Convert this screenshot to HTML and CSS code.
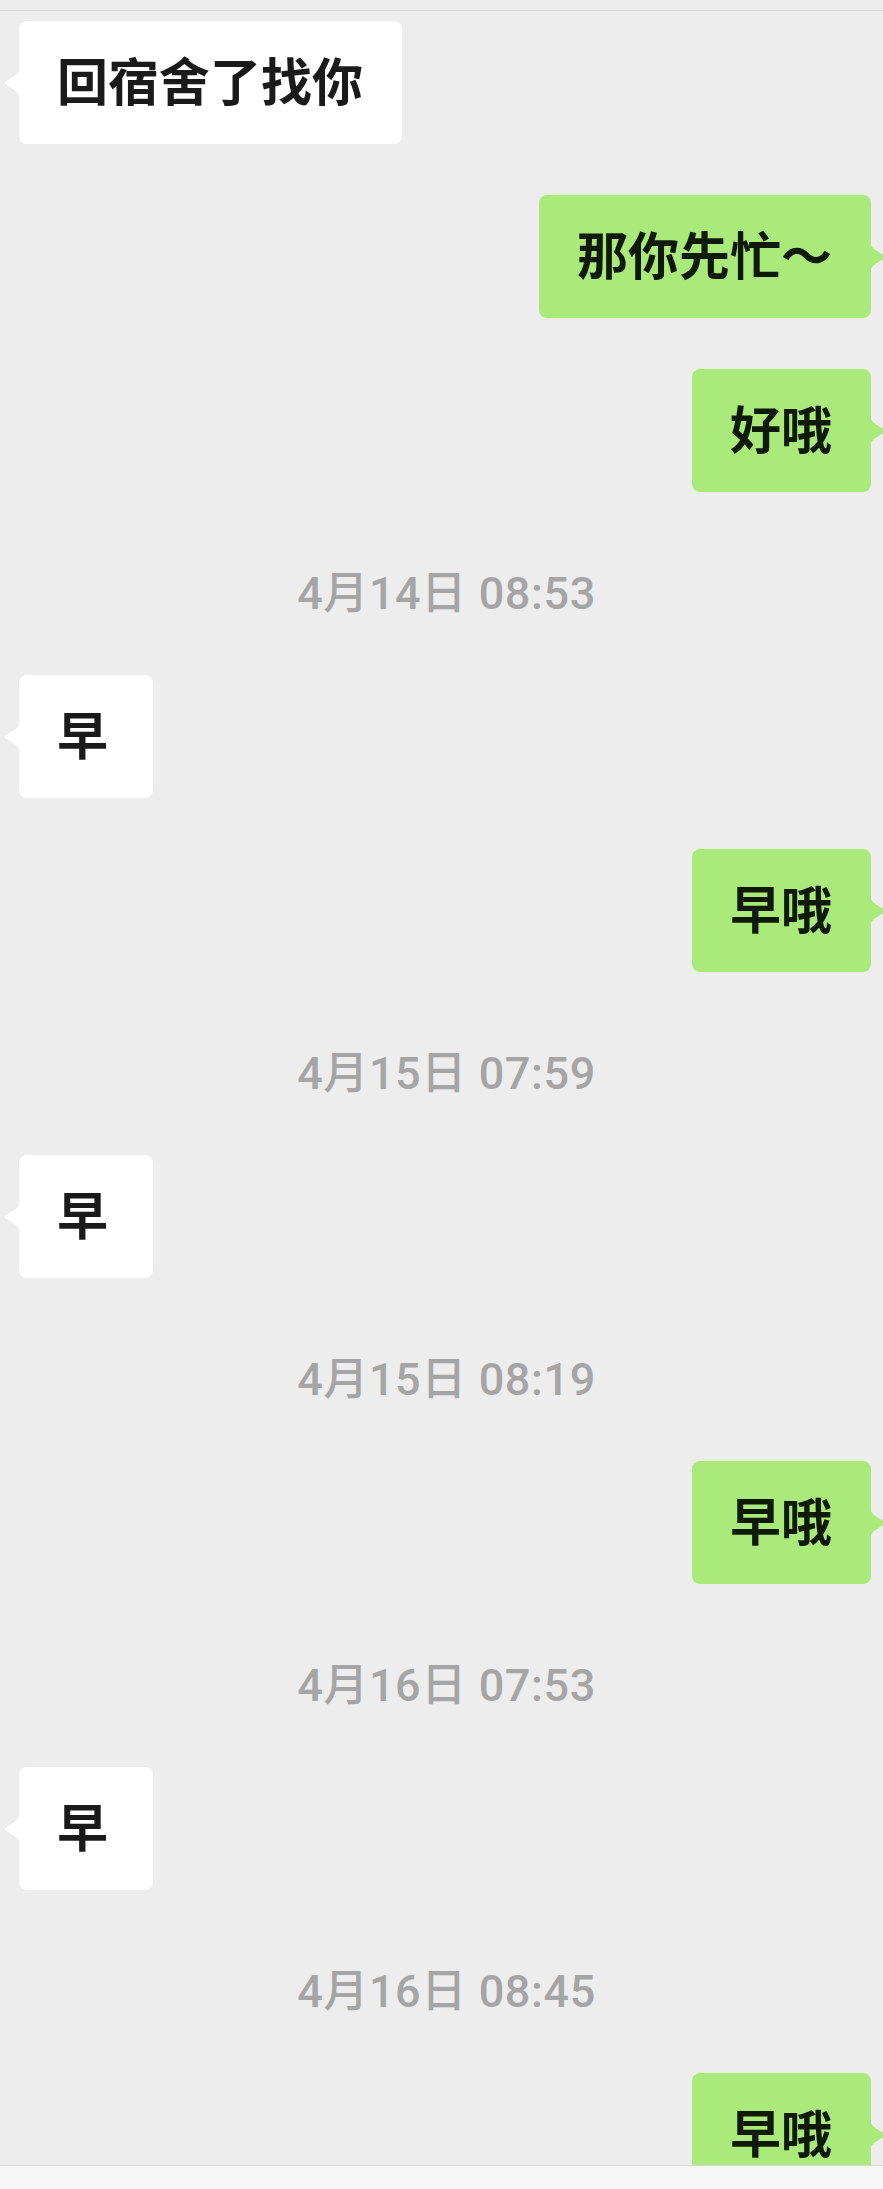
FILE: index.html
```html
<!DOCTYPE html>
<html lang="zh">
<head>
<meta charset="utf-8">
<title>Chat</title>
<link rel="stylesheet" href="styles.css">
</head>
<body>
<div class="screen">
  <div class="topbar"></div>
  <div class="chat">
    <div class="msg in"><div class="bubble">回宿舍了找你<svg class="tail" viewBox="0 0 16 36"><path d="M16 2 C16 6 14 8 12 10 L1 17 Q0 18 1 19 L12 26 C14 28 16 30 16 34 Z"/></svg></div></div>
    <div class="msg out"><div class="bubble">那你先忙～<svg class="tail" viewBox="0 0 16 36"><path d="M16 2 C16 6 14 8 12 10 L1 17 Q0 18 1 19 L12 26 C14 28 16 30 16 34 Z"/></svg></div></div>
    <div class="msg out"><div class="bubble">好哦<svg class="tail" viewBox="0 0 16 36"><path d="M16 2 C16 6 14 8 12 10 L1 17 Q0 18 1 19 L12 26 C14 28 16 30 16 34 Z"/></svg></div></div>
    <div class="time">4月14日 08:53</div>
    <div class="msg in"><div class="bubble">早<svg class="tail" viewBox="0 0 16 36"><path d="M16 2 C16 6 14 8 12 10 L1 17 Q0 18 1 19 L12 26 C14 28 16 30 16 34 Z"/></svg></div></div>
    <div class="msg out"><div class="bubble">早哦<svg class="tail" viewBox="0 0 16 36"><path d="M16 2 C16 6 14 8 12 10 L1 17 Q0 18 1 19 L12 26 C14 28 16 30 16 34 Z"/></svg></div></div>
    <div class="time">4月15日 07:59</div>
    <div class="msg in"><div class="bubble">早<svg class="tail" viewBox="0 0 16 36"><path d="M16 2 C16 6 14 8 12 10 L1 17 Q0 18 1 19 L12 26 C14 28 16 30 16 34 Z"/></svg></div></div>
    <div class="time">4月15日 08:19</div>
    <div class="msg out"><div class="bubble">早哦<svg class="tail" viewBox="0 0 16 36"><path d="M16 2 C16 6 14 8 12 10 L1 17 Q0 18 1 19 L12 26 C14 28 16 30 16 34 Z"/></svg></div></div>
    <div class="time">4月16日 07:53</div>
    <div class="msg in"><div class="bubble">早<svg class="tail" viewBox="0 0 16 36"><path d="M16 2 C16 6 14 8 12 10 L1 17 Q0 18 1 19 L12 26 C14 28 16 30 16 34 Z"/></svg></div></div>
    <div class="time">4月16日 08:45</div>
    <div class="msg out"><div class="bubble">早哦<svg class="tail" viewBox="0 0 16 36"><path d="M16 2 C16 6 14 8 12 10 L1 17 Q0 18 1 19 L12 26 C14 28 16 30 16 34 Z"/></svg></div></div>
  </div>
  <div class="inputbar"></div>
</div>
</body>
</html>
```

FILE: styles.css
```css
html, body {
  margin: 0;
  padding: 0;
  background: #ededed;
}

.screen {
  width: 883px;
  height: 2189px;
  display: flex;
  flex-direction: column;
  overflow: hidden;
  background: #ededed;
}

.topbar {
  flex: none;
  height: 10px;
  background: #ececec;
  border-bottom: 1px solid #d5d5d5;
}

.chat {
  flex: 1;
  min-height: 0;
  overflow: hidden;
  display: flex;
  flex-direction: column;
  gap: 51px;
  padding: 10px 12px 0 19px;
}

.msg {
  display: flex;
}

.msg.in {
  justify-content: flex-start;
}

.msg.out {
  justify-content: flex-end;
}

.bubble {
  position: relative;
  box-sizing: border-box;
  min-width: 134px;
  padding: 29px 39px 35px 38px;
  border-radius: 8px;
  font-family: "Noto Sans CJK SC", "Noto Sans", sans-serif;
  font-size: 51px;
  font-weight: 600;
  line-height: 59px;
  white-space: nowrap;
}

.msg.in .bubble {
  background: #ffffff;
  color: #1a1a1a;
}

.msg.out .bubble {
  background: #a9ea7a;
  color: #0e1a07;
}

.tail {
  position: absolute;
  top: 44px;
  width: 16px;
  height: 36px;
}

.msg.in .tail {
  left: -15px;
  fill: #ffffff;
}

.msg.out .tail {
  right: -15px;
  fill: #a9ea7a;
  transform: scaleX(-1);
}

.time {
  padding: 28px 0 8px 3px;
  text-align: center;
  font-family: Roboto, "Noto Sans CJK SC", sans-serif;
  font-size: 45px;
  font-weight: 500;
  line-height: 45px;
  letter-spacing: 0.6px;
  color: #a5a5a5;
}

.inputbar {
  flex: none;
  height: 23px;
  background: #f6f6f6;
  border-top: 1px solid #d8d8d8;
}
```
